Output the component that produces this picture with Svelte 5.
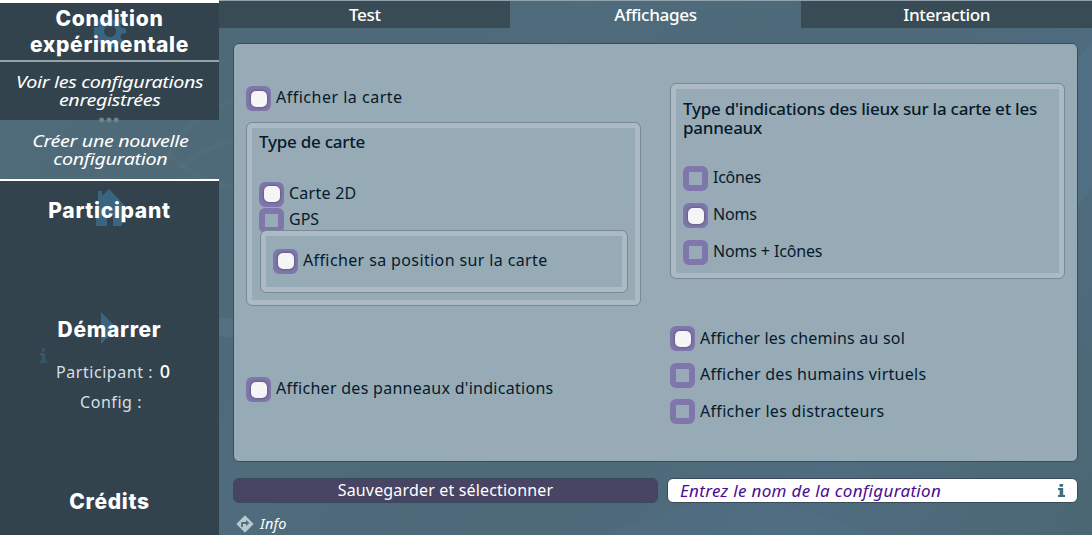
<script>
  const lieux = [
    { label: 'Icônes', on: false, ls: -0.25 },
    { label: 'Noms', on: true, ls: -0.2 },
    { label: 'Noms + Icônes', on: false, ls: -0.15 }
  ];
  const options = [
    { label: 'Afficher les chemins au sol', on: true, ls: 0.2 },
    { label: 'Afficher des humains virtuels', on: false, ls: 0.28 },
    { label: 'Afficher les distracteurs', on: false, ls: 0.3 }
  ];
</script>

{#snippet check(label, on, ls)}
  <div class="check">
    <span class="box" class:on></span>
    <span class="label" style="letter-spacing: {ls}px">{label}</span>
  </div>
{/snippet}

<div class="app">
  <svg class="backdrop" width="1092" height="535" viewBox="0 0 1092 535" fill="none">
    <g stroke="#a9c0cc" stroke-opacity=".035" stroke-width="5">
      <path d="M165 165C175 120 240 85 360 62S620 72 690 112" />
      <path d="M168 150C190 190 280 205 400 182S570 160 610 115" />
      <path d="M180 168C230 120 330 130 420 152S500 230 430 265" />
    </g>
    <path d="M185 332C205 313 270 312 330 335S470 395 640 420C470 400 330 345 185 332z" fill="#a9c0cc" fill-opacity=".08" />
    <path d="M700 500C780 490 840 525 880 535H600Z" fill="#5b7f9b" fill-opacity=".13" />
    <path d="M1092 40C1040 120 920 220 850 290L990 310 1092 190Z" fill="#6f94b5" fill-opacity=".1" />
  </svg>

  <aside>
    <div class="cell head cond">
      <svg class="gear" width="32" height="32" viewBox="0 0 32 32">
        <g fill="#3a6580">
          <circle cx="16" cy="16" r="12" />
          {#each [0, 45, 90, 135] as a}
            <path d="M13.500 0h5l1.500 32h-8z" transform="rotate({a} 16 16)" />
          {/each}
        </g>
        <circle cx="16" cy="16" r="6" fill="#33444e" />
      </svg>
      <span>Condition<br />expérimentale</span>
    </div>
    <div class="cell sub saved"><span>Voir les configurations<br />enregistrées</span></div>
    <div class="cell sub current">
      <svg class="dots" width="20" height="6" viewBox="0 0 20 6" fill="#71818b">
        <circle cx="2.6" cy="3" r="2.5" /><circle cx="10" cy="3" r="2.5" /><circle cx="17.2" cy="3" r="2.5" />
      </svg>
      <span>Créer une nouvelle<br />configuration</span>
    </div>
    <div class="cell head part">
      <svg class="house" width="32" height="39" viewBox="0 0 32 39" fill="#3a6580">
        <path d="M4 3h4v5l7-7 16 17-3 2v18h-9V26h-6v12H2V20l-1-1 3-4z" />
      </svg>
      <span>Participant</span>
    </div>
    <div class="cell head start">
      <svg class="play" width="16" height="32" viewBox="0 0 16 32"><path d="M0 0l16 16L0 32z" fill="#3a6580" /></svg>
      <span>Démarrer</span>
    </div>
    <div class="status">
      <svg class="ghost" width="7" height="15" viewBox="0 0 7 15" fill="#36566a">
        <circle cx="3.6" cy="2" r="1.9" /><path d="M0 5h5.5v7.500H7V15H0v-2.500h1.600V7.500H0z" />
      </svg>
      <div class="line first">Participant : <b>0</b></div>
      <div class="line second">Config :</div>
    </div>
    <div class="cell head credits"><span>Crédits</span></div>
  </aside>

  <main>
    <nav>
      <div class="tab"><span class="wide">Test</span></div>
      <div class="tab active"><span class="wide">Affichages</span></div>
      <div class="tab"><span class="wide">Interaction</span></div>
    </nav>

    <section class="panel">
      <div class="col left">
        {@render check('Afficher la carte', true, 0.5)}
        <div class="frame map">
          <h3><span class="wide">Type de carte</span></h3>
          {@render check('Carte 2D', true, 0.25)}
          {@render check('GPS', false, 0)}
          <div class="frame nested">{@render check('Afficher sa position sur la carte', true, 0.38)}</div>
        </div>
        {@render check("Afficher des panneaux d'indications", true, 0.28)}
      </div>
      <div class="col right">
        <div class="frame places">
          <h3><span class="wide">Type d'indications des lieux sur la carte et les<br />panneaux</span></h3>
          <div class="list">
            {#each lieux as o}{@render check(o.label, o.on, o.ls)}{/each}
          </div>
        </div>
        <div class="list more">
          {#each options as o}{@render check(o.label, o.on, o.ls)}{/each}
        </div>
      </div>
    </section>

    <div class="actions">
      <div class="save">Sauvegarder et sélectionner</div>
      <div class="name">
        <span>Entrez le nom de la configuration</span>
        <svg width="7" height="13" viewBox="0 0 7 13" fill="#426d7e">
          <rect x="1.500" y="0" width="3.600" height="2.800" rx=".6" /><path d="M0 4h5.200v7H7v2H0v-2h1.600V6H0z" />
        </svg>
      </div>
    </div>

    <footer>
      <svg width="18" height="18" viewBox="0 0 18 18">
        <path d="M9 .8L17.200 9 9 17.200.8 9z" fill="#b9c9d2" stroke="#b9c9d2" stroke-linejoin="round" />
        <path d="M6 12V8h5" fill="none" stroke="#526f7d" stroke-width="1.800" /><path d="M10 5l3.500 3-3.500 3z" fill="#526f7d" />
      </svg>
      <span>Info</span>
    </footer>
  </main>
</div>

<style>
  :global(body) { background: #4e6977; overflow: hidden; }
  .app {
    position: relative;
    display: flex;
    width: 1092px;
    height: 535px;
    overflow: hidden;
    font-family: "Noto Sans", "Open Sans", sans-serif;
    font-size: 16px;
    color: #061a2b;
    background: linear-gradient(125deg, #506d7d, #4e6977 18%, #4f6b7c 40%, #4e6978 62%, #4f6c80 80%, #4c6773);
  }
  .backdrop { position: absolute; left: 0; top: 0; }
  aside {
    position: relative;
    flex: none;
    box-sizing: border-box;
    width: 219px;
    height: 535px;
    border-top: 3px solid #fff;
    color: #fff;
    display: flex;
    flex-direction: column;
  }
  .cell {
    position: relative;
    box-sizing: border-box;
    display: flex;
    align-items: center;
    justify-content: center;
    text-align: center;
    background: rgba(50, 66, 75, .97);
    white-space: nowrap;
  }
  .cell > span { position: relative; }
  .cell svg { position: absolute; }
  .head { font: 800 21px/26px Inter, sans-serif; letter-spacing: .7px; }
  .cond { height: 59px; border-bottom: 2px solid #94a2aa; }
  .gear { left: 94px; top: 12px; }
  .sub { font-style: italic; font-size: 17px; line-height: 18px; letter-spacing: -.3px; }
  .saved { height: 58px; }
  .current { height: 61px; background: none; border-bottom: 2px solid #fff; }
  .sub > span { left: .5px; transform: scaleX(1.16); }
  .dots { left: 99px; top: -3px; }
  .part { flex: none; height: 59px; }
  .house { left: 94px; top: 7px; }
  .start { flex: none; height: 119px; padding-top: 60px; }
  .play { left: 101px; top: 72px; }
  .status {
    position: relative;
    box-sizing: border-box;
    height: 111px;
    background: rgba(50, 66, 75, .97);
    color: #d9dfe2;
    line-height: 30px;
    letter-spacing: .55px;
  }
  .ghost { position: absolute; left: 40px; top: -11px; }
  .line { white-space: nowrap; }
  .first { margin-top: -2px; padding-left: 56px; }
  .line b { margin-left: 2px; font: 500 18px/1 "Noto Sans", sans-serif; color: #fff; }
  .second { padding-left: 80px; }
  .credits { flex: 1; padding-bottom: 2px; }
  main { position: relative; flex: 1; min-width: 0; }
  nav { display: grid; grid-template: 27px / 291px 291px 291px; height: 27px; border-top: 1px solid #91a2ac; }
  .tab { display: flex; justify-content: center; line-height: 28px; color: #fff; background: #394b55; }
  .tab .wide { transform: scaleX(1.07); }
  .active { background: none; }
  .wide { display: inline-block; font-weight: 500; letter-spacing: -.3px; white-space: nowrap; }
  .panel {
    box-sizing: border-box;
    display: flex;
    gap: 29px;
    width: 845px;
    height: 419px;
    margin: 15px 0 0 14px;
    padding: 0 12px;
    border: 1px solid #394e59;
    border-radius: 6px;
    background: rgba(162, 180, 191, .87);
  }
  .col { width: 395px; }
  .left { padding-top: 42px; }
  .right { padding-top: 39px; }
  .check { display: flex; align-items: center; height: 25px; gap: 5px; }
  .box {
    flex: none;
    box-sizing: border-box;
    width: 25px;
    height: 25px;
    border: 6px solid #7f76ab;
    border-radius: 6px;
  }
  .box.on { display: grid; place-items: center; background: #7f76ab; }
  .box.on::after { content: ""; width: 16px; height: 16px; margin: -2px; border-radius: 5px; background: #f5f4f7; box-shadow: 0 0 2px 1px #685d87; }
  .label { position: relative; top: -2px; line-height: 24px; white-space: nowrap; }
  .map .label, .more .label { top: -1px; }
  .frame {
    box-sizing: border-box;
    border: 1px solid #788a95;
    border-radius: 6px;
    box-shadow: inset 0 0 0 5px #acbac3;
  }
  h3 { margin: 0; font-size: 17px; font-weight: 500; line-height: 19px; }
  h3 .wide { position: relative; top: -1px; letter-spacing: -.24px; }
  .map { height: 184px; margin-top: 11px; padding: 10px 12px 0 12px; }
  .map h3 { height: 48px; }
  .map .check { height: 26px; }
  .nested { position: relative; width: 368px; height: 63px; margin: -3px 0 0 1px; padding: 17px 12px; }
  .map + .check { margin-top: 71px; }
  .places { height: 196px; padding: 16px 12px; }
  .list { display: grid; gap: 12px; }
  .places .list { margin-top: 28px; }
  .more { margin-top: 47px; gap: 11.7px; }
  .actions { position: relative; display: flex; gap: 9px; margin: 16px 0 0 14px; align-items: center; }
  .save, .name { box-sizing: border-box; border: 1px solid #3b4a58; border-radius: 6px; }
  .save { width: 425px; height: 25px; background: #484463; color: #fff; text-align: center; line-height: 23px; letter-spacing: .17px; }
  .name {
    display: flex;
    align-items: center;
    justify-content: space-between;
    width: 411px;
    height: 25px;
    padding: 0 12px;
    background: #fff;
    color: #4b0b92;
    font-size: 17px;
    font-style: italic;
    line-height: 23px;
    letter-spacing: .33px;
  }
  footer { display: flex; align-items: center; gap: 5px; margin: 12px 0 0 17px; height: 18px; color: #fff; font-size: 14.500px; font-style: italic; }
  footer span { position: relative; left: 1px; top: -1px; letter-spacing: .2px; }
</style>
